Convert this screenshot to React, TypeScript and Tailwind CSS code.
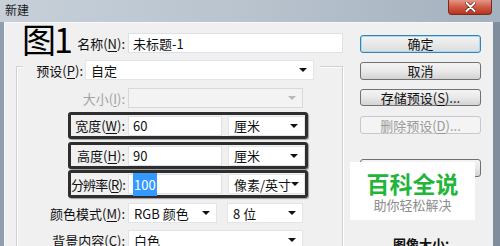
import React from "react";

const U = ({ a, k, b }: { a: string; k: string; b: string }) => (
  <span className="whitespace-nowrap">
    {a}
    <span className="underline underline-offset-[2px] decoration-1">{k}</span>
    {b}
  </span>
);

const Arrow = ({ gray }: { gray?: boolean }) => (
  <span
    className={`ml-auto mr-[6px] w-0 h-0 shrink-0 border-l-[4px] border-r-[4px] border-t-[4px] border-l-transparent border-r-transparent ${
      gray ? "border-t-[#b8b8b8]" : "border-t-[#111]"
    }`}
  />
);

const Select = ({ w, children, disabled }: { w: string; children?: React.ReactNode; disabled?: boolean }) => (
  <div
    className={`${w} h-[20px] shrink-0 flex items-center border ${
      disabled ? "bg-[#f3f3f3] border-[#d8d8d8]" : "bg-white border-[#e1e5ea]"
    }`}
  >
    <span className="pl-[5px] text-[13px] leading-none text-[#111] whitespace-nowrap">{children}</span>
    <Arrow gray={disabled} />
  </div>
);

const Input = ({ w, children }: { w: string; children?: React.ReactNode }) => (
  <div className={`${w} h-[20px] shrink-0 flex items-center bg-white border border-[#dbe1e8]`}>
    <span className="pl-[4px] text-[13px] leading-none text-[#111] whitespace-nowrap">{children}</span>
  </div>
);

const Label = ({ w, children, gray, tight }: { w: string; children: React.ReactNode; gray?: boolean; tight?: boolean }) => (
  <div
    className={`${w} shrink-0 flex justify-end items-center text-[13px] leading-none ${
      gray ? "text-[#a3a3a3]" : "text-[#111]"
    } ${tight ? "tracking-[-0.8px]" : ""}`}
  >
    {children}
  </div>
);

const Boxed = ({ children, h }: { children: React.ReactNode; h: string }) => (
  <div
    className={`ml-[51px] w-[240px] ${h} border-[3px] border-[#2e2e2e] rounded-[3px] flex items-center shadow-[1px_1px_1px_rgba(0,0,0,0.35)]`}
  >
    {children}
  </div>
);

const Btn = ({ children, mt, variant }: { children?: React.ReactNode; mt: string; variant?: "default" | "disabled" }) => {
  const cls =
    variant === "default"
      ? "border-[#3c7fb1] shadow-[inset_0_0_0_1px_#9fdcf5] bg-gradient-to-b from-[#f4f4f4] to-[#dcdcdc] text-[#111]"
      : variant === "disabled"
      ? "border-[#c6c9cc] bg-[#f4f4f4] text-[#9a9a9a]"
      : "border-[#707070] bg-gradient-to-b from-[#f4f4f4] via-[#e9e9e9] to-[#d3d3d3] text-[#111]";
  return (
    <div className={`${mt} w-[121px] h-[18px] border rounded-[3px] flex items-center justify-center text-[13px] leading-none ${cls}`}>
      {children}
    </div>
  );
};

export default function App() {
  return (
    <div className="relative w-[500px] h-[246px] overflow-hidden flex flex-col font-['Noto_Sans_CJK_SC','Noto_Sans',sans-serif]">
      {/* title bar */}
      <div className="h-[22px] shrink-0 flex items-start bg-gradient-to-r from-[#c7d0d9] via-[#b8c3ce] to-[#a4b1be]">
        <span className="ml-[5px] mt-[4px] text-[12px] leading-none text-[#1a1a1a]">新建</span>
        <div className="ml-auto mr-[8px] w-[44px] h-[15px] rounded-b-[4px] border border-t-0 border-[#7d2a1e] bg-gradient-to-b from-[#e3968a] via-[#cf5a44] to-[#b8331f] flex items-center justify-center">
          <svg width="11" height="10" viewBox="0 0 11 10">
            <path d="M1.5 1 L9.5 9 M9.5 1 L1.5 9" stroke="#5a1a10" strokeWidth="3.2" strokeLinecap="round" />
            <path d="M1.5 1 L9.5 9 M9.5 1 L1.5 9" stroke="#ffffff" strokeWidth="2" strokeLinecap="round" />
          </svg>
        </div>
      </div>

      {/* frame + body */}
      <div className="flex-1 flex bg-gradient-to-r from-[#8f9dac] to-[#7f8d9c]">
        <div className="ml-[4px] w-[489px] h-[230px] bg-[#f0f0f0] border-l border-t border-[#f8f9fa] flex">
          {/* left column */}
          <div className="w-[339px] shrink-0 flex flex-col">
            <div className="h-[43px] shrink-0 flex">
              <div className="w-[120px] shrink-0 flex">
                <span className="ml-[17px] -mt-[3px] self-start text-[34px] leading-[38px] text-black whitespace-nowrap tracking-[-2px]">图1</span>
                <div className="ml-auto mt-[10px] h-[20px] flex items-center text-[13px] leading-none text-[#111]">
                  <U a="名称(" k="N" b="):" />
                </div>
              </div>
              <div className="ml-[3px] mt-[10px]">
                <Input w="w-[215px]">未标题-1</Input>
              </div>
            </div>

            {/* group box */}
            <div className="ml-[11px] w-[327px] h-[200px] shrink-0 border border-[#cdd1d5] shadow-[inset_1px_1px_0_#ffffff,1px_1px_0_#ffffff] flex flex-col">
              <div className="-mt-[7px] h-[20px] flex">
                <div className="w-[6px] shrink-0" />
                <div className="w-[62px] shrink-0 bg-[#f0f0f0] flex justify-end items-center pr-[2px] text-[13px] leading-none text-[#111]">
                  <U a="预设(" k="P" b="):" />
                </div>
                <Select w="w-[229px]">自定</Select>
                <div className="w-[6px] shrink-0 bg-[#f0f0f0]" />
              </div>

              <div className="mt-[8px] h-[20px] flex">
                <Label w="w-[108px]" gray>
                  <U a="大小(" k="I" b="):" />
                </Label>
                <div className="ml-[3px]">
                  <Select w="w-[175px]" disabled />
                </div>
              </div>

              <div className="mt-[4px]">
                <Boxed h="h-[27px]">
                  <Label w="w-[54px]">
                    <U a="宽度(" k="W" b="):" />
                  </Label>
                  <div className="ml-[3px]">
                    <Input w="w-[94px]">60</Input>
                  </div>
                  <div className="ml-[6px]">
                    <Select w="w-[77px]">厘米</Select>
                  </div>
                </Boxed>
              </div>

              <div className="mt-[3px]">
                <Boxed h="h-[27px]">
                  <Label w="w-[54px]">
                    <U a="高度(" k="H" b="):" />
                  </Label>
                  <div className="ml-[3px]">
                    <Input w="w-[94px]">90</Input>
                  </div>
                  <div className="ml-[6px]">
                    <Select w="w-[77px]">厘米</Select>
                  </div>
                </Boxed>
              </div>

              <div className="mt-[1px]">
                <Boxed h="h-[28px]">
                  <Label w="w-[54px]" tight>
                    <U a="分辨率(" k="R" b="):" />
                  </Label>
                  <div className="ml-[3px]">
                    <Input w="w-[94px]">
                      <span className="bg-[#3399ff] text-white px-[1px] py-[2px]">100</span>
                    </Input>
                  </div>
                  <div className="ml-[6px]">
                    <Select w="w-[77px]">像素/英寸</Select>
                  </div>
                </Boxed>
              </div>

              <div className="mt-[5px] h-[20px] flex">
                <Label w="w-[108px]">
                  <U a="颜色模式(" k="M" b="):" />
                </Label>
                <div className="ml-[3px]">
                  <Select w="w-[89px]">RGB 颜色</Select>
                </div>
                <div className="ml-[10px]">
                  <Select w="w-[76px]">8 位</Select>
                </div>
              </div>

              <div className="mt-[7px] h-[20px] flex">
                <Label w="w-[108px]">
                  <U a="背景内容(" k="C" b="):" />
                </Label>
                <div className="ml-[3px]">
                  <Select w="w-[175px]">白色</Select>
                </div>
              </div>
            </div>
          </div>

          {/* right column */}
          <div className="flex-1 flex flex-col pl-[16px]">
            <Btn mt="mt-[12px]" variant="default">确定</Btn>
            <Btn mt="mt-[9px]">取消</Btn>
            <Btn mt="mt-[9px]">
              <U a="存储预设(" k="S" b=")..." />
            </Btn>
            <Btn mt="mt-[10px]" variant="disabled">
              <U a="删除预设(" k="D" b=")..." />
            </Btn>
            <Btn mt="mt-[25px]" />
            <div className="mt-[59px] pl-[33px] text-[13px] leading-[16px] text-[#111] font-bold whitespace-nowrap">图像大小:</div>
          </div>
        </div>
      </div>

      {/* watermark overlay */}
      <div className="absolute left-[350px] top-[162px] w-[125px] h-[58px] bg-white flex flex-col items-center justify-center">
        <span className="text-[23px] leading-[26px] font-bold text-[#22b53a]">百科全说</span>
        <span className="mt-[2px] text-[13px] leading-[14px] text-[#8c8c8c]">助你轻松解决</span>
      </div>
    </div>
  );
}
